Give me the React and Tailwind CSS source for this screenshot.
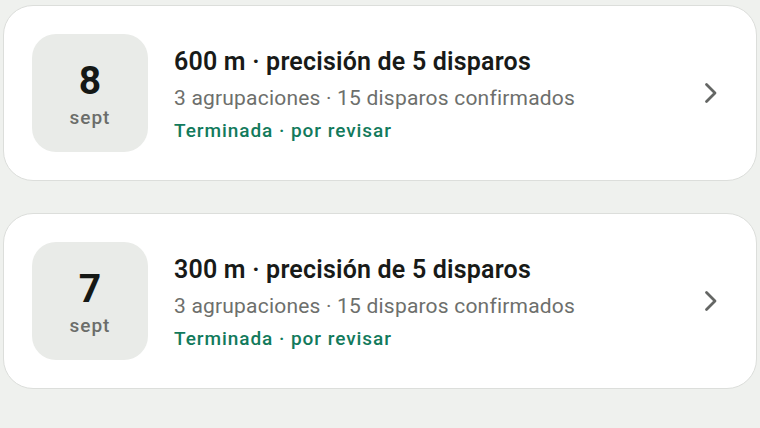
import React from "react";

function Card({ day, title }) {
  return (
    <div className="flex items-center rounded-[30px] border border-[#dcdedb] bg-white pl-[28px] pr-[38px] h-[176px]">
      <div className="flex h-[118px] w-[116px] shrink-0 flex-col items-center justify-center rounded-[24px] bg-[#e9ebe8] pt-[3px]">
        <div className="text-[39px] font-bold leading-[40px] text-[#151815]">{day}</div>
        <div className="mt-[6px] text-[19px] font-medium leading-[22px] tracking-[0.05em] text-[#6b6d6a]">sept</div>
      </div>
      <div className="ml-[26px] flex min-w-0 flex-1 flex-col pt-[4px]">
        <div className="text-[25px] font-semibold leading-[30px] tracking-[0.2px] text-[#181a18]">{title}</div>
        <div className="mt-[7px] text-[21px] leading-[28px] tracking-[0.2px] text-[#6d6f6c]">3 agrupaciones · 15 disparos confirmados</div>
        <div className="mt-[7px] text-[19px] font-medium leading-[24px] tracking-[0.05em] text-[#127a5c]">Terminada · por revisar</div>
      </div>
      <svg width="14" height="22" viewBox="0 0 14 22" className="shrink-0">
        <path d="M2.5 2.5 L11 11 L2.5 19.5" fill="none" stroke="#646664" strokeWidth="2.8" strokeLinecap="round" strokeLinejoin="round" />
      </svg>
    </div>
  );
}

export default function App() {
  return (
    <div className="min-h-[428px] w-[760px] bg-[#eff1ee] px-[3px] pt-[5px]" style={{ fontFamily: "Roboto, 'Noto Sans', sans-serif" }}>
      <div className="flex flex-col gap-[32px]">
        <Card day="8" title="600 m · precisión de 5 disparos" />
        <Card day="7" title="300 m · precisión de 5 disparos" />
      </div>
    </div>
  );
}
